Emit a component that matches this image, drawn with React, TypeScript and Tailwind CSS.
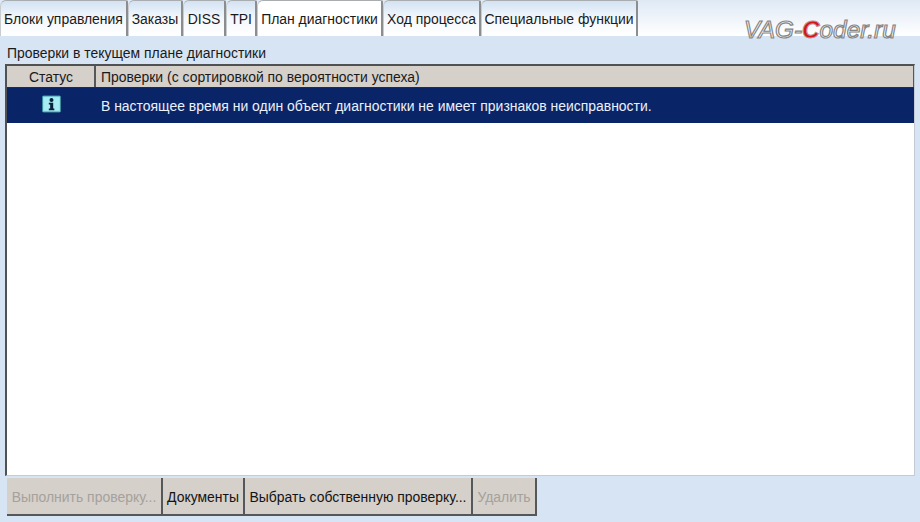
const tabs = [
  { label: "Блоки управления", w: "w-[128px]" },
  { label: "Заказы", w: "w-[55px]" },
  { label: "DISS", w: "w-[43px]" },
  { label: "TPI", w: "w-[31px]" },
  { label: "План диагностики", w: "w-[126px]", active: true },
  { label: "Ход процесса", w: "w-[98px]" },
  { label: "Специальные функции", w: "w-[157px]" },
];

const buttons = [
  { label: "Выполнить проверку...", w: "w-[156px]", disabled: true },
  { label: "Документы", w: "w-[82px]" },
  { label: "Выбрать собственную проверку...", w: "w-[228px]" },
  { label: "Удалить", w: "w-[64px]", disabled: true },
];

export default function App() {
  return (
    <div className="relative flex h-[522px] w-[920px] flex-col overflow-hidden bg-[#d6e4f4] font-['Liberation_Sans',Arial,sans-serif] text-[13.95px] text-[#1a1a1a]">
      <div className="flex h-[36px] shrink-0 bg-gradient-to-b from-[#dfe9f5] to-[#ffffff]">
        {tabs.map((t) => (
          <div
            key={t.label}
            className={`flex h-[36px] items-center justify-center whitespace-nowrap rounded-tl-[6px] rounded-tr-[2px] border-t border-r-2 border-l border-t-[#a9adb0] border-r-[#8b8d8e] border-l-[#c9ccce] pt-[1px] ${t.w} ${
              t.active ? "bg-white" : "bg-gradient-to-b from-[#d3e2f3] via-[#f4f8fc] to-white"
            }`}
          >
            {t.label}
          </div>
        ))}
      </div>

      <div className="flex h-[28px] shrink-0 items-end pb-[3px] pl-[7px] leading-[16px]">
        Проверки в текущем плане диагностики
      </div>

      <div className="mx-[5px] flex h-[412px] w-[910px] shrink-0 flex-col border-t-2 border-r border-b border-l-2 border-t-[#4f5152] border-r-[#c3ccd6] border-b-[#c3ccd6] border-l-[#4f5152] bg-white">
        <div className="flex h-[21px] shrink-0 border-r border-r-[#55585a] bg-[#d5d0ca] leading-[22px]">
          <div className="w-[89px] shrink-0 border-r-2 border-r-[#55585a] pl-[1px] text-center">Статус</div>
          <div className="pl-[5px]">Проверки (с сортировкой по вероятности успеха)</div>
        </div>
        <div className="flex h-[36px] shrink-0 items-center border-t border-t-[#202a4a] bg-[#0a2468] text-[#eaf1fb]">
          <div className="flex w-[89px] shrink-0 justify-center pb-[4px]">
            <svg width="19" height="18" viewBox="0 0 20 18">
              <rect x="0.5" y="0.5" width="19" height="17" rx="1" fill="#8fe3ee" stroke="#3c8d9c" />
              <rect x="2" y="2" width="16" height="14" fill="#a6ecf3" />
              <circle cx="10" cy="4.8" r="2.1" fill="#07203a" />
              <path d="M7.2 7.6h4.6v6.2h1.2v1.9H7.2v-1.9h1.4V9.4H7.2z" fill="#07203a" />
            </svg>
          </div>
          <div className="pl-[5px] pt-[2px]">В настоящее время ни один объект диагностики не имеет признаков неисправности.</div>
        </div>
      </div>

      <div className="flex pl-[7px] pt-[2px]">
        {buttons.map((b) => (
          <div
            key={b.label}
            className={`flex h-[38px] items-center justify-center whitespace-nowrap border-r-2 border-b-2 border-r-[#55585a] border-b-[#55585a] bg-[#d5d0ca] pt-[3px] ${b.w} ${
              b.disabled ? "text-[#a5a19c]" : "text-[#141414]"
            }`}
          >
            {b.label}
          </div>
        ))}
      </div>

      <div className="absolute left-[744px] top-[16px] whitespace-nowrap text-[24.3px] leading-[28px] text-white italic [-webkit-text-stroke:1.2px_#858585]">
        VAG-<span className="font-bold text-[#d5141c] [-webkit-text-stroke:1px_#b98f90]">C</span>oder.ru
      </div>
    </div>
  );
}
